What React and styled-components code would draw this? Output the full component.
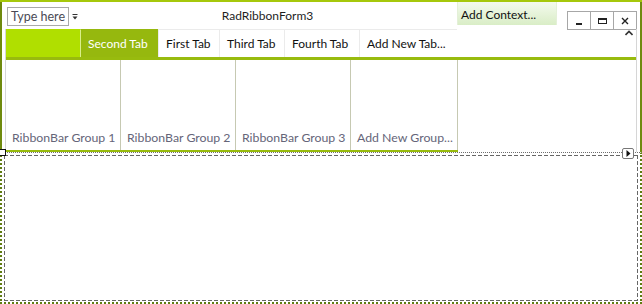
import React from 'react';
import styled, { createGlobalStyle } from 'styled-components';

const GlobalStyle = createGlobalStyle`
  html, body {
    margin: 0;
    padding: 0;
    background: #fff;
    overflow: hidden;
  }
  body {
    font-family: Lato, "Open Sans", "Liberation Sans", sans-serif;
    font-size: 12px;
  }
`;

const Window = styled.div`
  width: 642px;
  height: 304px;
  box-sizing: border-box;
  display: flex;
  flex-direction: column;
  background: #fff;
  border-top: 2px solid #a6c80c;
`;

const Upper = styled.div`
  display: flex;
  flex-direction: column;
  border-left: 2px solid #6f8a0e;
  border-right: 2px solid #6f8a0e;
`;

const TitleBar = styled.div`
  height: 27px;
  display: flex;
  align-items: flex-start;
`;

const QuickBox = styled.div`
  margin: 5px 0 0 5px;
  width: 62px;
  height: 19px;
  box-sizing: border-box;
  border: 1px solid #a9a9a9;
  color: #4a4a55;
  padding-left: 3px;
  line-height: 17px;
  font-size: 12.5px;
`;

const QuickArrow = styled.svg`
  margin: 12px 0 0 3px;
`;

const Title = styled.div`
  flex: 1;
  text-align: center;
  line-height: 28px;
  color: #1e1e1e;
`;

const ContextTab = styled.div`
  width: 100px;
  height: 23px;
  box-sizing: border-box;
  padding-left: 3px;
  line-height: 25px;
  color: #111;
  background: linear-gradient(#f4faee, #d9edc6);
  border-left: 1px solid #e4f0d8;
  border-right: 1px solid #e4f0d8;
`;

const WinButtons = styled.div`
  display: flex;
  margin: 9px 3px 0 11px;
`;

const WinButton = styled.div`
  width: 24px;
  height: 19px;
  box-sizing: border-box;
  border: 1px solid #a7a7a7;
  margin-left: -1px;
  display: flex;
  align-items: center;
  justify-content: center;
  background: #fff;
`;

const Ribbon = styled.div`
  margin: 0 3px;
  border-left: 1px solid #d6d6d6;
  border-right: 1px solid #d6d6d6;
  display: flex;
  flex-direction: column;
`;

const TabRow = styled.div`
  height: 28px;
  display: flex;
  border-bottom: 3px solid #98bb0e;
`;

const Lime = styled.div`
  width: 74px;
  background: #b0df00;
`;

const Tab = styled.div`
  width: ${p => p.w}px;
  box-sizing: border-box;
  padding-left: 7px;
  line-height: 28px;
  white-space: nowrap;
  color: ${p => (p.active ? '#fff' : '#111')};
  background: ${p => (p.active ? '#96b80e' : '#fff')};
  border-left: 1px solid ${p => (p.active ? '#d9ef8a' : '#ebebeb')};
  border-top: 1px solid ${p => (p.active ? '#96b80e' : '#ebebeb')};
`;

const Collapse = styled.svg`
  margin: 1px 3px 0 auto;
`;

const Groups = styled.div`
  height: 92px;
  display: flex;
`;

const GroupStrip = styled.div`
  display: flex;
  border-bottom: 2px solid #98bb0e;
`;

const Group = styled.div`
  width: ${p => p.w}px;
  box-sizing: border-box;
  border-right: 1px solid #c6c9b2;
  display: flex;
  align-items: flex-end;
  padding: 0 0 5px 6px;
  color: #656579;
  font-size: 12.3px;
  white-space: nowrap;
`;

const Lower = styled.div`
  flex: 1;
  position: relative;
  display: flex;
  border-top: 1px dotted #6e6e6e;
  border-left: 2px dotted #5f7c12;
  border-right: 2px dotted #5f7c12;
  border-bottom: 2px dotted #5f7c12;
`;

const dashH = 'repeating-linear-gradient(90deg, #666 0 4px, transparent 4px 6px)';
const dashV = 'repeating-linear-gradient(180deg, #666 0 4px, transparent 4px 6px)';

const Panel = styled.div`
  flex: 1;
  margin: 2px 2px 1px 2px;
  background-image: ${dashH}, ${dashH}, ${dashV}, ${dashV};
  background-size: 100% 1px, 100% 1px, 1px 100%, 1px 100%;
  background-position: top left, bottom left, top left, top right;
  background-repeat: no-repeat;
`;

const Handle = styled.div`
  position: absolute;
  left: -3px;
  top: -4px;
  width: 5px;
  height: 5px;
  border: 1px solid #111;
  background: #fff;
`;

const SmartTag = styled.div`
  position: absolute;
  right: 6px;
  top: -5px;
  width: 10px;
  height: 9px;
  border: 1px solid #777;
  border-radius: 2px;
  background: #fff;
  display: flex;
  align-items: center;
  justify-content: center;
`;

const tabs = [
  { label: 'Second Tab', w: 78, active: true },
  { label: 'First Tab', w: 61 },
  { label: 'Third Tab', w: 65 },
  { label: 'Fourth Tab', w: 75 },
  { label: 'Add New Tab...', w: 98 },
];

const groups = [
  { label: 'RibbonBar Group 1', w: 115 },
  { label: 'RibbonBar Group 2', w: 115 },
  { label: 'RibbonBar Group 3', w: 115 },
  { label: 'Add New Group...', w: 107 },
];

export default function App() {
  return (
    <>
      <GlobalStyle />
      <Window>
        <Upper>
          <TitleBar>
            <QuickBox>Type here</QuickBox>
            <QuickArrow width="6" height="6" viewBox="0 0 6 6">
              <rect x="0.5" y="0" width="5" height="1" fill="#333" />
              <path d="M0.5 2.5 L5.5 2.5 L3 5.5 Z" fill="#333" />
            </QuickArrow>
            <Title>RadRibbonForm3</Title>
            <ContextTab>Add Context...</ContextTab>
            <WinButtons>
              <WinButton>
                <svg width="8" height="8" viewBox="0 0 8 8">
                  <rect x="1" y="6" width="6" height="2" fill="#222" />
                </svg>
              </WinButton>
              <WinButton>
                <svg width="9" height="8" viewBox="0 0 9 8">
                  <rect x="0.5" y="1.5" width="8" height="5" fill="none" stroke="#222" />
                  <rect x="0" y="1" width="9" height="2" fill="#222" />
                </svg>
              </WinButton>
              <WinButton>
                <svg width="8" height="8" viewBox="0 0 8 8">
                  <path d="M1 1 L7 7 M7 1 L1 7" stroke="#222" strokeWidth="1.4" />
                </svg>
              </WinButton>
            </WinButtons>
          </TitleBar>
          <Ribbon>
            <TabRow>
              <Lime />
              {tabs.map(t => (
                <Tab key={t.label} w={t.w} active={t.active}>
                  {t.label}
                </Tab>
              ))}
              <Collapse width="8" height="6" viewBox="0 0 8 6">
                <path d="M0.5 5 L4 1.5 L7.5 5" fill="none" stroke="#333" strokeWidth="1.6" />
              </Collapse>
            </TabRow>
            <Groups>
              <GroupStrip>
                {groups.map(g => (
                  <Group key={g.label} w={g.w}>
                    {g.label}
                  </Group>
                ))}
              </GroupStrip>
            </Groups>
          </Ribbon>
        </Upper>
        <Lower>
          <Handle />
          <SmartTag>
            <svg width="5" height="7" viewBox="0 0 5 7">
              <path d="M0.5 0 L4.5 3.5 L0.5 7 Z" fill="#111" />
            </svg>
          </SmartTag>
          <Panel />
        </Lower>
      </Window>
    </>
  );
}
